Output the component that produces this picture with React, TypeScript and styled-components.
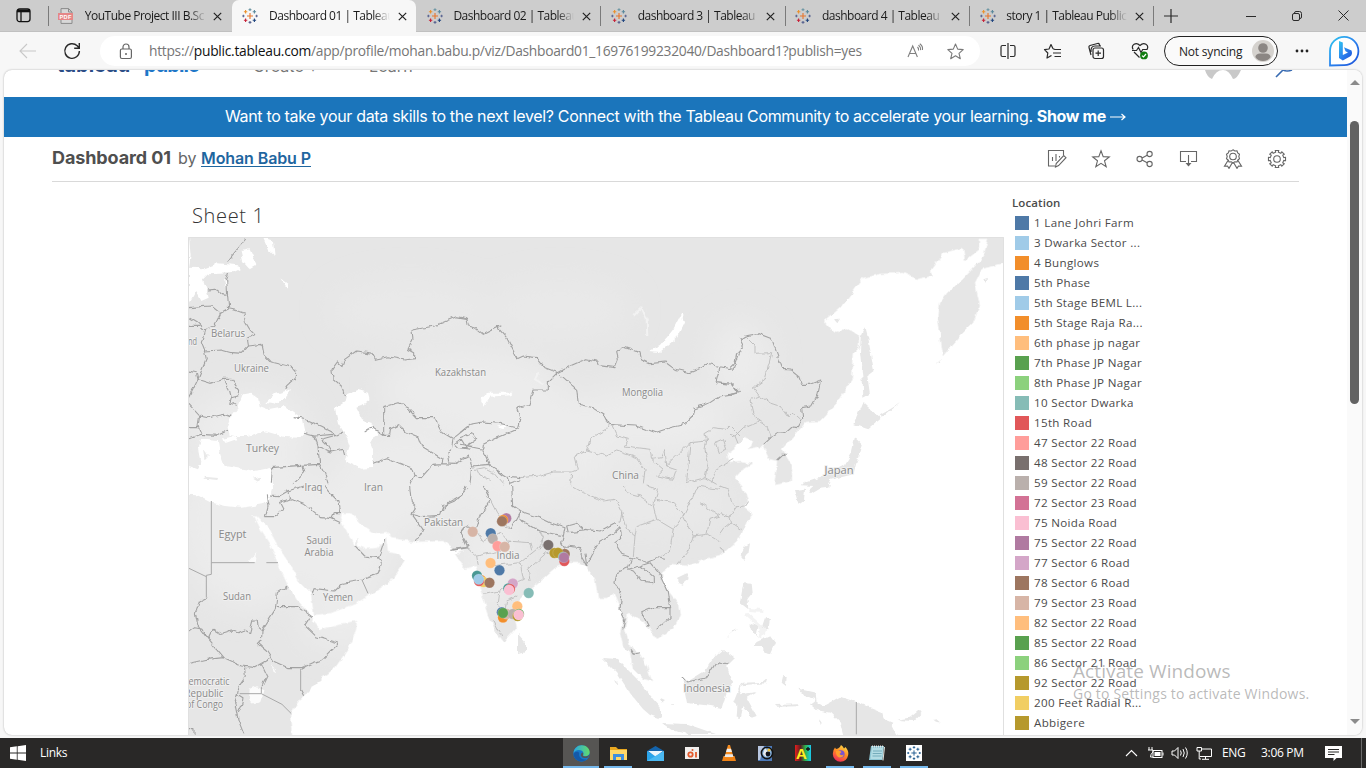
import React from "react";
import styled, { createGlobalStyle } from "styled-components";

const Global = createGlobalStyle`
  * { box-sizing: border-box; }
  body { margin: 0; overflow: hidden; background: #f7f7f7; font-family: "Open Sans", "Noto Sans", sans-serif; }
`;

const Screen = styled.div`
  width: 1366px; height: 768px; display: flex; flex-direction: column; position: relative; overflow: hidden;
`;

/* ---------- browser chrome ---------- */
const TabStrip = styled.div`
  height: 32px; flex: none; display: flex; background: #cdcdcd; border-bottom: 1px solid #c0c0c0; padding-left: 16px;
`;
const TabMenu = styled.div`
  width: 31.5px; display: flex; align-items: center;
`;
const TabBox = styled.div<{ $active?: boolean; $sep?: boolean }>`
  width: 184.3px; height: 32px; flex: none; display: flex; align-items: center; padding-left: 10.7px; position: relative;
  background: ${p => (p.$active ? "#f7f7f7" : "transparent")};
  border-radius: ${p => (p.$active ? "7px 7px 0 0" : "0")};
  &::before {
    content: ""; display: ${p => (p.$sep ? "block" : "none")};
    position: absolute; left: 0; top: 6px; width: 1px; height: 20px; background: #7a7a7a;
  }
`;
const TabText = styled.div`
  width: 121px; margin-left: 10.6px; font-size: 12px; color: #1b1b1b; white-space: nowrap; overflow: hidden; line-height: 18px;
  letter-spacing: -0.5px;
  mask-image: linear-gradient(90deg, #000 86%, transparent 100%);
`;
const CloseIcon = styled.svg` width: 9px; height: 9px; margin-left: 7.7px; flex: none; `;
const NewTab = styled.div` width: 40px; display: flex; align-items: center; padding-left: 11px; position: relative;
  &::before { content: ""; position: absolute; left: 0; top: 6px; width: 1px; height: 20px; background: #7a7a7a; }
`;
const WindowButtons = styled.div` flex: 1; display: flex; align-items: center; justify-content: flex-end; gap: 36px; padding-right: 17px; `;

const Toolbar = styled.div`
  height: 37px; flex: none; display: flex; align-items: center; background: #f7f7f7; padding: 1px 0 0 18px;
`;
const NavIcons = styled.div` width: 82px; display: flex; gap: 27px; align-items: center; `;
const AddressBar = styled.div`
  width: 880px; height: 30px; border-radius: 15px; background: #fff; display: flex; align-items: center; padding: 0 16px 0 19px;
`;
const Url = styled.div`
  flex: 1; margin-left: 16px; font-size: 13.8px; line-height: 20px; color: #767676; white-space: nowrap; letter-spacing: -0.28px;
  b { font-weight: 400; color: #111; }
`;
const ToolIcons = styled.div` display: flex; align-items: center; width: 184px; padding-left: 19px; gap: 24px; `;
const Profile = styled.div`
  width: 114px; height: 30px; border: 1px solid #222; border-radius: 15px; display: flex; align-items: center; justify-content: space-between;
  padding: 0 3px 0 14px; font-size: 12px; color: #222; letter-spacing: -0.2px; white-space: nowrap; background: #fafafa;
`;
const More = styled.div` width: 50px; display: flex; justify-content: center; padding-right: 2px; `;

/* ---------- page ---------- */
const Frame = styled.div`
  height: 665px; margin: 1px 4px 3px; flex: none; display: flex; background: #fff; border-radius: 8px; overflow: hidden; box-shadow: 0 0 2px #a8a8a8;
`;
const Page = styled.div` width: 1343px; height: 665px; display: flex; flex-direction: column; overflow: hidden; `;
const Scrollbar = styled.div`
  width: 15px; background: #fafafa; display: flex; flex-direction: column; align-items: center; padding: 10px 0 11px;
`;
const Arrow = styled.div<{ $down?: boolean }>`
  border: 5px solid transparent; border-top-width: ${p => (p.$down ? 5 : 0)}px; border-bottom-width: ${p => (p.$down ? 0 : 5)}px;
  border-top-color: #8b8b8b; border-bottom-color: #8b8b8b;
`;
const Thumb = styled.div` width: 9px; height: 283px; border-radius: 5px; background: #636363; margin: 36px 0 auto; `;

const SiteHeader = styled.div`
  height: 27px; flex: none; display: flex; overflow: hidden; padding-left: 51px; font-family: Inter, sans-serif; line-height: 22px;
`;
const Brand = styled.div`
  width: 198px; display: flex; margin-top: -16px; font-size: 20px; font-weight: 700; color: #2b4d86; letter-spacing: 0; white-space: nowrap;
`;
const BrandFirst = styled.span` width: 76px; padding-left: 2px; `;
const BrandPlus = styled.span` width: 13px; color: #a6a6a6; font-size: 12px; font-weight: 400; padding-left: 3px; `;
const BrandSecond = styled.span` color: #1f77c8; letter-spacing: -0.9px; `;
const NavLink = styled.div` width: 116px; margin-top: -15px; font-size: 16px; color: #777; letter-spacing: .1px; `;
const HeaderArt = styled.svg` width: 100px; height: 12px; margin-left: 720px; `;
const Banner = styled.div`
  height: 40px; flex: none; background: #1b75bb; color: #fff; display: flex; align-items: center; justify-content: center; gap: 4px;
  font-family: Inter, sans-serif; font-size: 16px; white-space: nowrap; letter-spacing: -0.325px; padding-bottom: 2px;
  b { display: flex; align-items: center; gap: 4px; }
`;
const TitleRow = styled.div`
  height: 45px; flex: none; margin: 0 48px; border-bottom: 1px solid #d9d9d9; display: flex; align-items: center; padding-right: 12px;
  font-family: Inter, sans-serif; color: #4f4f4f; white-space: nowrap;
`;
const VizTitle = styled.div` width: 126px; font-size: 18px; font-weight: 700; letter-spacing: -0.1px; padding-bottom: 3px; `;
const By = styled.div` width: 23px; font-size: 16px; color: #666; padding-bottom: 2px; `;
const Author = styled.div`
  flex: 1; font-size: 16px; font-weight: 600; color: #1f669f; letter-spacing: -0.1px; padding-bottom: 2px;
  text-decoration: underline; text-decoration-thickness: 1px; text-underline-offset: 2px; text-decoration-skip-ink: none;
`;
const Actions = styled.div` display: flex; gap: 24px; `;
const Viz = styled.div` display: flex; flex: 1; padding-left: 184px; `;
const Sheet = styled.div` width: 816px; flex: none; `;
const SheetTitle = styled.div`
  height: 55px; padding: 20px 0 0 4px; font-size: 20px; line-height: 28px; color: #333; font-weight: 300; letter-spacing: 0.65px;
`;
const MapSvg = styled.svg` display: block; width: 816px; height: 498px; `;
const Legend = styled.div` padding: 13px 0 0 8px; font-size: 12px; color: #4b4b4b; `;
const LegendTitle = styled.div` height: 18px; line-height: 15px; font-size: 11.5px; font-weight: 600; letter-spacing: 0.1px; `;
const LegendRow = styled.div` height: 20px; display: flex; align-items: center; padding: 0 0 2px 3px; gap: 5px; white-space: nowrap; `;
const Swatch = styled.div<{ $c: string }>` width: 14px; height: 14px; background: ${p => p.$c}; margin-top: 1px; `;
const LegendText = styled.span` font-size: 11.6px; letter-spacing: 0.32px; `;

const Watermark = styled.div`
  position: absolute; left: 1073px; top: 659px; color: rgba(120,120,120,.52); white-space: nowrap; pointer-events: none;
  div:first-child { font-size: 19px; line-height: 25px; letter-spacing: 0.1px; }
  div:last-child { font-size: 14px; line-height: 20px; letter-spacing: 0.2px; }
`;

/* ---------- taskbar ---------- */
const Taskbar = styled.div` height: 30px; flex: none; background: #292827; display: flex; align-items: center; color: #fff; font-size: 12px; `;
const StartArea = styled.div` width: 563px; display: flex; align-items: center; gap: 14px; padding-left: 10px; letter-spacing: -0.3px; line-height: 16px; `;
const TaskItem = styled.div<{ $active?: boolean; $run?: boolean }>`
  width: 36px; margin-right: 1px; height: 30px; display: flex; align-items: center; justify-content: center; position: relative;
  background: ${p => (p.$active ? "#565553" : "transparent")};
  &::after { content: ""; display: ${p => (p.$run ? "block" : "none")}; position: absolute; height: 2px; bottom: 0;
    left: ${p => (p.$active ? 0 : 4)}px; right: ${p => (p.$active ? 0 : 4)}px; background: #76b9ed; }
`;
const Tray = styled.div` flex: 1; display: flex; align-items: center; justify-content: flex-end; letter-spacing: -0.35px; white-space: nowrap; `;
const Lang = styled.div` width: 39px; margin-left: 9px; padding-bottom: 1px; `;
const Clock = styled.div` width: 64px; letter-spacing: -0.3px; padding-bottom: 1px; `;
const Sliver = styled.div` width: 5px; height: 30px; border-left: 1px solid #6a6a6a; margin-left: 19px; `;

const plus = (x: number, y: number, r: number, c: string) => (
  <path key={`${x}-${y}`} d={`M${x - r} ${y}H${x + r}M${x} ${y - r}V${y + r}`} stroke={c} strokeWidth="1.1" />
);
const TableauMark = ({ mono }: { mono?: boolean }) => {
  const k = (c: string) => (mono ? "#1f5b8f" : c);
  return (
    <svg width="16" height="16" viewBox="0 0 16 16" fill="none">
      {plus(8, 8, 3, k("#e8762d"))}
      {plus(3.6, 3.7, 1.7, k("#eb912c"))}
      {plus(12.4, 3.7, 1.7, k("#59879b"))}
      {plus(3.6, 12.3, 1.7, k("#c72037"))}
      {plus(12.4, 12.3, 1.7, k("#1f447e"))}
      {plus(8, 1.6, 1.4, k("#7199a6"))}
      {plus(8, 14.4, 1.4, k("#5b6591"))}
      {plus(1.4, 8, 1.2, k("#5c6692"))}
      {plus(14.6, 8, 1.2, k("#5c6692"))}
    </svg>
  );
};
const PdfMark = () => (
  <svg width="16" height="16" viewBox="0 0 16 16">
    <path d="M3 .6H10.5L14 4V15.4H3Z" fill="#d8d8d8" stroke="#8a8a8a" />
    <path d="M10.5 .6V4H14" fill="none" stroke="#8a8a8a" />
    <rect x="0" y="5" width="15" height="7" fill="#e58787" />
    <text x="1.4" y="10.8" fontSize="5.6" fontWeight="700" fill="#fff" fontFamily="Liberation Sans" textLength="12">PDF</text>
  </svg>
);
const Close = () => (
  <CloseIcon viewBox="0 0 9 9"><path d="M.8 .8L8.2 8.2M8.2 .8L.8 8.2" stroke="#222" strokeWidth="1.2" /></CloseIcon>
);

const tabs = [
  { t: "YouTube Project III B.Sc", pdf: true, sep: true },
  { t: "Dashboard 01 | Tableau", active: true },
  { t: "Dashboard 02 | Tableau" },
  { t: "dashboard 3 | Tableau", sep: true },
  { t: "dashboard 4 | Tableau", sep: true },
  { t: "story 1 | Tableau Public", sep: true },
];

const S = { fill: "none", stroke: "#2a2a2a", strokeWidth: 1.2 } as const;
const star = "M8.5 1L10.7 6.1L16.2 6.6L12 10.3L13.3 15.7L8.5 12.8L3.7 15.7L5 10.3L.8 6.6L6.3 6.1Z";

const BrowserChrome = () => (
  <>
    <TabStrip>
      <TabMenu>
        <svg width="15" height="15" viewBox="0 0 15 15" fill="none" stroke="#111" strokeWidth="1.3">
          <rect x="1" y="1" width="13" height="12.6" rx="2.5" /><path d="M1 3H14" strokeWidth="2.6" /><path d="M5 4V14" />
        </svg>
      </TabMenu>
      {tabs.map(t => (
        <TabBox key={t.t} $active={t.active} $sep={t.sep}>
          {t.pdf ? <PdfMark /> : <TableauMark />}
          <TabText>{t.t}</TabText>
          <Close />
        </TabBox>
      ))}
      <NewTab><svg width="14" height="14"><path d="M7 0V14M0 7H14" {...S} /></svg></NewTab>
      <WindowButtons>
        <svg width="10" height="10"><path d="M0 5.5H10" {...S} strokeWidth="1" /></svg>
        <svg width="10" height="10" {...S} strokeWidth="1"><rect x=".5" y="2.5" width="7" height="7" rx="1.5" /><path d="M2.5 2.5V2Q2.5 .5 4 .5H7.5Q9.5 .5 9.5 2.5V6Q9.5 7.5 8 7.5" /></svg>
        <svg width="11" height="11"><path d="M.5 .5L10.5 10.5M10.5 .5L.5 10.5" {...S} strokeWidth="1" /></svg>
      </WindowButtons>
    </TabStrip>
    <Toolbar>
      <NavIcons>
        <svg width="18" height="16" fill="none" stroke="#c8c8c8" strokeWidth="1.1"><path d="M2 8H18M9 1L2 8L9 15" /></svg>
        <svg width="18" height="18" {...S} strokeWidth="1.4"><path d="M16.4 9A7.3 7.3 0 1 1 14.2 3.8L16.2 6M16.3 1V6.2H11.2" /></svg>
      </NavIcons>
      <AddressBar>
        <svg width="14" height="17" fill="none" stroke="#666" strokeWidth="1.2"><rect x="1.4" y="6" width="11" height="9.5" rx="1.5" /><path d="M4 6V4A3 3 0 0 1 10 4V6" /><circle cx="7" cy="11" r="1" fill="#666" stroke="none" /></svg>
        <Url>https://<b>public.tableau.com</b>/app/profile/mohan.babu.p/viz/Dashboard01_16976199232040/Dashboard1?publish=yes</Url>
        <svg width="18" height="16" fill="none" stroke="#808080" strokeWidth="1.1"><path d="M1 14L5.7 3L10.4 14M2.6 10.5H8.8M10.5 4Q12 5.5 11.5 7.5M11.5 2.2Q14 4.3 13.5 7.2M12.8 .8Q16.2 3.4 15.4 7" /></svg>
        <svg width="17" height="17" style={{ marginLeft: 22 }} fill="none" stroke="#7a7a7a" strokeWidth="1.1"><path d={star} strokeLinejoin="round" /></svg>
      </AddressBar>
      <ToolIcons>
        <svg width="18" height="16" {...S}><path d="M9 0V16M7 2.5H3.5Q2 2.5 2 4V12Q2 13.5 3.5 13.5H7M11 2.5H14.5Q16 2.5 16 4V12Q16 13.5 14.5 13.5H11" /></svg>
        <svg width="20" height="17" {...S} style={{ marginLeft: 2 }}><path d="M10 5.7L8 1.5L6 6L1.5 6.7L4.8 10L4 15L7.5 13M11.5 6.5H18M10 10H18M11.5 13.5H18M10 5.7L12 6.5M4 15L8.5 12.5" strokeLinejoin="round" /></svg>
        <svg width="18" height="18" {...S}><rect x="6" y="6" width="10.5" height="10.5" rx="2" /><path d="M11.2 8.5V14M8.5 11.2H14M4 13L2 5.5Q1.5 4 3 3.5L10.5 1.5Q12 1.2 12.4 2.5L13 4M4 10Q3.5 4 8 4H14" /></svg>
        <svg width="19" height="18" {...S} style={{ marginLeft: 2 }}><path d="M2.2 7.5C-.5 3 5 -.7 9 3.5C13 -.7 18.5 3 16 7.5M3 10L8.5 15.5M1 8.5H5.5L7.5 5.5L10 10.5L11.7 7.5H16.5" /><circle cx="13" cy="13.4" r="3.9" fill="#107c10" stroke="none" /><path d="M11 13.6L12.5 15L15 12" stroke="#fff" /></svg>
      </ToolIcons>
      <Profile>Not syncing
        <svg width="22" height="22"><circle cx="11" cy="11" r="11" fill="#d5d2ce" /><circle cx="11" cy="8" r="4.8" fill="#8b8683" /><path d="M3.3 17Q4 13.5 8 13.5H14Q18 13.5 18.7 17Q16 21 11 21Q6 21 3.3 17Z" fill="#8b8683" /></svg>
      </Profile>
      <More><svg width="14" height="4"><circle cx="2" cy="2" r="1.4" fill="#222" /><circle cx="7" cy="2" r="1.4" fill="#222" /><circle cx="12" cy="2" r="1.4" fill="#222" /></svg></More>
      <svg width="32" height="32" viewBox="0 0 32 32">
        <defs><linearGradient id="bing" x1="0" y1="0" x2="1" y2="1"><stop offset="0" stopColor="#2fc8ef" /><stop offset=".5" stopColor="#2b83ee" /><stop offset="1" stopColor="#1b4fd8" /></linearGradient></defs>
        <path d="M2 30.5V16A14.2 14.2 0 1 1 16 30.2Z" fill="#fff" stroke="url(#bing)" strokeWidth="1.8" />
        <path d="M11 6L14.8 7.4V20L20 17.5L17.5 16.2L16 12.3L23.5 15.5Q25 19.5 22 21.5L14.8 25.6L11 23Z" fill="url(#bing)" />
      </svg>
    </Toolbar>
  </>
);

/* ---------- map artwork: detail groups are drawn on 3x tiles ---------- */
const tile = (x: number, y: number) => `translate(${x} ${y}) scale(.33333)`;

const ocean =
  "M292 734L290 716L298 701L304 697L316 683L335 668L348 649L356 631L357 621L338 624L320 630L312 621L313 618L298 601L288 586L278 564L270 544L260 528L253 514L268 528L281 551L291 566L300 583L311 594L314 615L331 613L355 604L373 593L391 581L405 561L398 553L388 551L386 538L378 548L365 549L358 546L357 538L354 546L348 534L340 518L341 513L351 513L361 524L375 533L388 532L391 538L415 542L443 541L453 549L464 551L455 554L465 569L475 566L477 571L479 586L485 603L490 619L498 636L503 642L508 638L517 628L515 619L518 606L519 600L528 591L540 581L555 568L567 563L580 563L587 568L595 579L598 598L607 598L613 593L620 609L623 619L620 633L623 646L630 653L633 669L643 679L652 681L647 666L640 654L630 646L625 629L628 613L637 618L648 626L656 639L673 629L680 616L678 603L670 593L663 583L662 573L673 564L687 566L702 561L720 556L737 541L745 528L752 513L743 506L748 501L742 486L735 478L741 471L753 464L740 462L730 463L727 454L735 448L745 438L752 441L748 449L763 446L769 459L777 461L776 472L774 485L780 484L792 481L792 466L782 449L797 433L806 422L820 421L837 403L852 379L854 353L859 348V335L845 328L840 333L833 331L825 321L840 308L853 291L863 278L880 274L903 273L917 279L933 276L930 271L943 253L963 248L965 261L980 249V239H988L984 254L978 263L963 279L947 293L940 303L938 319L943 356L960 336L973 323L980 306L975 283L982 269L1008 262V740H292Z";

const waterWest =
  "M3 3L8 60L3 95L50 97L90 82L150 88L155 100L130 112L60 115L45 130L55 160L62 185L40 195L25 165L3 205ZM158 45L185 40L205 85L185 97L165 75ZM225 5L255 15L260 60L240 40ZM280 130L300 145V160ZM108 130L120 140L115 160ZM165 475L190 470L210 485L215 510L240 520L290 510L340 545L350 590L335 605L290 603L230 585L180 600L125 600L118 570L130 540L150 515ZM232 500L260 475L310 460L290 485L265 507ZM105 608L140 600L145 610L115 620ZM475 475L510 462L540 470L545 490L520 510L505 515L525 555L550 560L570 600L545 615L555 640V695L520 698L470 675L485 630L475 600L450 560L440 515L470 495ZM-12 690L40 690L30 640L40 610L90 615L95 650L110 690L170 700L200 705L250 695L255 750L245 785L225 805L160 815L110 810L70 800L25 778L-12 775Z";
const bordersWest =
  "M118 76L176 6M122 112L116 130L118 165L122 218M60 162L80 160L105 176L118 178M3 215L40 212L70 210L98 232L122 218L140 222L168 232L172 258L185 280L200 296L178 306L182 330L222 325L228 355L250 378L300 390L324 404L320 430L300 448L292 460M98 232L80 268L50 282L30 262L3 245M3 271H35M50 282L40 320L50 345L100 342L130 350L160 352L182 330M50 345L55 370L30 430L3 485M3 405L25 410L30 430L68 442L105 430L130 430L152 460L150 480L130 485L125 502L148 508M105 430L125 465L130 485M3 505L35 540L60 545L110 535L130 542M35 540L30 570L40 595L3 608M40 595L90 598L120 583M3 575H30M320 545L350 550L400 570L435 588L440 600L465 588M345 592L380 600L435 595M380 600L390 630L430 648L420 630L400 610L435 600M390 630L395 685M430 648L465 640L470 658M253 695L290 692L340 688L395 685L410 710L420 745M345 690L350 710L315 745M470 480L460 450L435 428L432 400L448 378L462 392L470 370L505 345L555 352L565 370L600 362L650 372L680 368V350L660 340L675 310L672 282L740 270L805 242L840 248M587 598V512L630 500L660 515L688 545L740 545L765 590L795 608L840 572M530 585L550 573L587 598H605L608 578L632 566L655 588L690 602L700 630L765 670L762 683L735 685L700 725L678 718L670 695L630 680L600 665L555 682M762 683L800 685L840 665M795 608L790 640L780 650L785 680M678 718L665 745M253 695L250 740M800 625L820 610L835 635L810 635Z";
const bordersMid =
  "M0 240L20 245L25 270L45 275L70 295L100 280L120 270L110 272L140 305L172 368L190 360L230 365L255 395L295 410L335 388L380 368L410 375L415 388L465 395L475 370L470 350L487 332L540 350L545 372L570 383L615 378L645 400L690 410L725 395L745 382L780 392L820 400L840 345M780 392L768 440L815 445L838 470L780 480L750 500L705 515L700 540L675 565L630 575L585 590L530 570L445 565L430 535L400 515L355 505L350 460L300 415M295 410L265 440V462H222L210 505L170 515L182 550L175 577L100 610L70 625L68 640L90 690L140 720L180 725M0 590L30 565L70 558L120 562L175 577M0 605L35 590L50 610L20 630L68 640M0 672L25 660L35 690L85 685L130 720M35 690L30 745M0 625L40 632M0 635L30 640M140 720L150 745L175 735L180 725";
const provincesMid =
  "M180 725L240 720L280 708H335L355 700L345 660L380 645L390 610L440 580L445 565M380 645L440 660L470 645L530 665L555 700L550 745M455 565L470 600L505 610L495 630L570 640L575 670M335 708L332 745M575 670L605 665L615 640L620 690L650 700L640 730L590 720L610 700L575 670M620 690L650 660L690 620L740 615L735 590L760 575L800 580L810 570L840 600M690 620L680 740L735 725L745 680L735 640L740 615M765 620L790 610L800 640L775 650ZM755 740L770 700L820 670M735 725L770 745M45 700L70 695L100 710L130 745M50 700L60 720L90 730";
const bordersEast =
  "M0 395L15 380L20 350L40 330L30 310L45 300L85 293L125 308L140 350L158 400L185 402L205 418L215 445L240 445L272 432L262 480L245 510L215 515L218 550L205 572L190 570L165 592L145 590L120 608L98 628M0 440L25 470L0 475M140 672L155 658H170";
const provincesEast =
  "M45 300L75 330V352L125 350L105 430L70 455L88 480L60 492L70 540L110 570L125 605M88 480L120 500L150 510L175 545L190 530L212 550M90 555L40 575L15 600L25 625M0 595L15 600";
const straightAfrica = "M70 45V265L55 268V335M70 230H200M235 230H270M3 247L55 272M338 555V615M155 623H220L282 655L310 683M220 605V623M522 282L540 322";
const bordersAfrica =
  "M55 335L35 345L22 380L30 420L60 460M60 460L75 430L100 445L130 435L150 440L170 432L185 440L195 402H208L210 425L222 435L230 420L262 370L268 320L298 300M0 440L20 425L45 430L60 460L105 515L60 520L0 533M105 515L160 540L200 545L245 520M222 435L220 465L208 472L235 495L255 525L300 545H340L375 530L405 520L452 472L385 452L350 418L365 395M262 362L330 362L372 392M350 540L338 555M338 615L347 632M170 545L172 570L155 595L148 625L140 650L150 700L168 745M220 535L237 570L220 605M148 625L165 635L162 655L150 680M372 325L378 308L440 315L465 292L522 282L570 265L580 230L572 215L530 210L500 178M572 215L590 160M432 98L400 95L350 55L305 38L300 15L345 0M305 38L275 50L285 70L260 92H232M245 30L270 32L300 15M235 25L240 60L232 92M432 98L440 80L460 80M432 98L458 110M455 80L450 45L420 15L410 0M665 0L670 50L685 65L672 85L700 92L755 88L765 60L800 45L840 5M672 85L705 130L685 168M840 115L815 140L830 165L840 185L790 193M3 728H18V745";
const bordersSouth =
  "M0 80L30 45L65 25L75 0M40 190L80 185L60 140L75 120L105 130L120 90L150 40L130 0M215 0L218 60L240 75L210 130M240 75L300 95L335 112L375 125L370 150L300 135L235 98ZM380 120L410 112L435 135L385 140ZM435 130L480 135L525 110L540 125L520 145L480 165L455 210L440 240L435 200M370 150L365 170L385 200L380 232M375 180L425 185L420 205L440 240M540 125L545 155L525 170L545 205L575 215L565 245L530 260L525 290L545 330L540 370L555 400L548 430M575 215L620 228L650 215L675 220M565 250L600 240L640 275V290L605 285L580 255L565 250M600 240L630 230L660 265L685 320L692 365L640 365L605 380L625 420M690 365V395L650 430M570 490L580 505L600 500M725 572L740 588L800 575L825 535L840 530";
const provincesSouth =
  "M105 130L130 165L180 140L200 165L270 170L275 190M110 210L180 195L210 165M80 185L110 210L115 240M150 240L240 230L250 280L200 300M240 230L290 190L310 155M270 285L265 250L320 200L345 195M130 325L180 315L210 290M180 315L175 350L180 380M235 330L200 345L190 400M160 400L185 450M300 135L310 155L300 190M210 130L170 110M150 40L170 80L210 130M395 0L430 20L490 45L525 40L545 80L540 110M545 80L560 130L585 150L590 120L650 100L640 60L600 30L560 20L550 0M650 100L700 130L730 90L700 50L650 40M730 90L760 150L800 145L840 170M700 130L690 190L660 215M760 150L740 200L710 235M840 10L770 0L750 50L730 90M585 150L580 210M640 60L655 10L620 0M800 145L810 100L840 90M780 50L840 90";

const labels: [string, number, number, number][] = [
  ["Belarus", 211, 337, 34], ["nd", 188, 345, 9], ["Ukraine", 234, 372, 35], ["Turkey", 246, 452, 33], ["Kazakhstan", 435, 376, 51],
  ["Mongolia", 622, 396, 41], ["China", 612, 479, 27], ["Japan", 824.5, 474, 29], ["Iraq", 304.5, 490.5, 18], ["Iran", 364, 490.5, 19],
  ["Egypt", 218.5, 538, 28], ["Saudi", 306.5, 544, 25], ["Arabia", 304.5, 556, 29], ["Yemen", 323, 601, 30], ["Sudan", 223, 600, 28],
  ["emocratic", 188.5, 685, 41], ["Republic", 184.5, 696.5, 39], ["of Congo", 186, 708, 37], ["Pakistan", 424, 525.5, 39], ["India", 496.5, 558.5, 23], ["Indonesia", 683.5, 692, 47],
];

const marks: [number, number, string][] = [
  [506.3, 518.3, "#b07aa1"], [503, 520, "#f28e2b"], [502, 521.3, "#9d7660"], [472.7, 531.7, "#d7b5a6"], [490.7, 533.2, "#4e79a7"],
  [492.7, 538.8, "#bab0ac"], [497.5, 546, "#ff9d9a"], [504.7, 546.8, "#d7b5a6"], [548.3, 545, "#79706e"], [564.8, 554, "#9d7660"],
  [554.5, 553, "#b6992d"], [558, 552.8, "#b6992d"], [564.3, 561, "#e15759"], [563.2, 557, "#86bcb6"], [564, 557.5, "#b07aa1"],
  [490.5, 563, "#ffbe7d"], [499.5, 570.3, "#4e79a7"], [477, 575.7, "#499894"], [481, 580, "#f28e2b"], [483.5, 582, "#f1ce63"],
  [479, 581, "#e15759"], [489.5, 582.7, "#9d7660"], [478.7, 579.3, "#a0cbe8"], [512.8, 583.5, "#d4a6c8"], [508.3, 588.5, "#499894"],
  [510, 589, "#e15759"], [509, 590, "#fabfd2"], [528.7, 593, "#86bcb6"], [517.3, 606.3, "#ffbe7d"], [501.8, 612.3, "#4e79a7"],
  [503, 617.5, "#f28e2b"], [506.7, 614, "#d7b5a6"], [512.7, 614, "#bab0ac"], [517.6, 616, "#b6992d"], [519, 614, "#59a14f"],
  [503, 613, "#59a14f"], [518.7, 614.7, "#fabfd2"],
];

const WorldMap = () => (
  <MapSvg viewBox="188 237 816 498">
    <defs>
      <filter id="rough" x="-2%" y="-2%" width="104%" height="104%" colorInterpolationFilters="sRGB">
        <feTurbulence type="fractalNoise" baseFrequency=".14" numOctaves="2" seed="7" result="n" />
        <feDisplacementMap in="SourceGraphic" in2="n" scale="5" xChannelSelector="R" yChannelSelector="G" />
      </filter>
      <filter id="haze"><feGaussianBlur stdDeviation="14" /></filter>
    </defs>
    <rect x="188" y="237" width="816" height="498" fill="#e6e6e6" />
    <g filter="url(#haze)" fill="#ececec">
      <ellipse cx="250" cy="520" rx="70" ry="90" /><ellipse cx="340" cy="540" rx="60" ry="60" /><ellipse cx="400" cy="480" rx="70" ry="50" />
      <ellipse cx="540" cy="440" rx="80" ry="50" /><ellipse cx="530" cy="490" rx="70" ry="20" /><ellipse cx="470" cy="390" rx="90" ry="40" />
      <ellipse cx="650" cy="420" rx="80" ry="35" /><ellipse cx="410" cy="310" rx="80" ry="30" fill="#e9e9e9" /><ellipse cx="250" cy="430" rx="60" ry="40" />
      <ellipse cx="560" cy="310" rx="70" ry="30" fill="#e9e9e9" /><ellipse cx="740" cy="360" rx="30" ry="40" /><ellipse cx="340" cy="620" rx="40" ry="30" />
      <ellipse cx="490" cy="560" rx="30" ry="50" /><ellipse cx="640" cy="500" rx="90" ry="30" fill="#e9e9e9" />
    </g>
    <g filter="url(#rough)">
      <path d={ocean} fill="#fff" stroke="#f4f4f4" strokeWidth=".8" />
      <g transform={tile(188, 236)}>
        <path d={waterWest} fill="#fff" />
        <path d="M195 728L220 722L212 738ZM50 722L90 726L88 732L50 728ZM10 650L40 680L30 700L3 690V650ZM45 640L60 660L50 670Z" fill="#e9e9e9" />
      </g>
      <g transform={tile(460, 236)} fill="#fff">
        <path d="M665 230L672 260L650 305L600 348L568 345L600 330L640 280ZM62 490L85 470L158 470L150 478L90 482L72 510ZM108 572L145 564L130 580Z" />
        <path d="M520 240L545 215L560 250L562 300M235 410L225 430L250 445" fill="none" stroke="#f2f2f2" strokeWidth="6" />
      </g>
      <g transform={tile(188, 486)} fill="#fbfbfb"><path d="M185 608L205 600L230 610L220 645L200 655L183 640ZM178 230L205 198L200 225ZM250 530L265 560L258 560Z" /></g>
      <g fill="#e6e6e6">
        <path d="M518 634L526 643V652L518 654ZM602 658L617 659L637 679L653 699L661 708V719L650 715L643 709L630 693L617 673ZM662 723L687 724L707 731L716 734H690L673 731ZM682 677L687 682L705 671L716 655L723 649L735 658L727 666L732 683L726 694L722 708L705 705L687 703Z" />
        <g transform={tile(730, 236)}>
          <path d="M405 272L415 310L432 405L412 420L420 475L400 485L398 430L390 350L392 300ZM398 498L452 548L415 580L370 565ZM375 605L395 625L385 660L370 715L300 732L290 752L215 748L225 738L290 715L345 685L365 650ZM618 385L635 368L630 380ZM450 538L510 502L455 545ZM312 250L330 248L322 262ZM760 130L775 125L765 138Z" />
        </g>
        <g transform={tile(720, 486)}>
          <path d="M222 12L255 8L252 45L235 56ZM265 14L290 -10L330 -5L325 5L300 8L272 25ZM75 180L90 172L85 205L70 225L62 205ZM70 292L95 293L98 320L82 340L85 370L60 350ZM92 410L115 420L110 450L92 430ZM135 395L150 400L145 430L120 440ZM95 485L110 468L150 450L165 470L150 505L130 500L130 480L100 480ZM15 460L50 425L45 435ZM65 590L130 588L142 578L138 592L65 598L60 625L110 618L80 635L110 690L95 695L70 660L62 695H50L52 660L40 650L60 600ZM190 570H200L198 600L185 590ZM165 657L235 655V661L170 662ZM298 700L305 710L298 720ZM235 608L290 620L293 650L310 660L360 632L410 648L490 680L495 700L520 710L515 720L530 750H370L360 710L330 680L290 672L270 655L290 640L250 630ZM530 702L570 695L598 672L605 680L580 705ZM640 695L660 712L650 712ZM670 722L690 738Z" />
          <path d="M85 372L130 375M80 385L130 430L120 455" stroke="#f3f3f3" strokeWidth="12" fill="none" />
        </g>
        <g transform={tile(440, 486)}><path d="M712 275L740 262L747 278L725 296L712 290ZM660 635L675 642L665 650ZM690 652H702V656ZM525 585L535 592L530 595ZM548 625L565 640Z" /></g>
      </g>
      <g fill="none" stroke="#a2a2a2" strokeWidth="3.3" strokeLinejoin="round">
        <g transform={tile(188, 236)}><path d={bordersWest} /></g>
        <g transform={tile(460, 236)}><path d={bordersMid} /><path d={provincesMid} stroke="#bdbdbd" strokeWidth="2.8" /></g>
        <g transform={tile(730, 236)}><path d={bordersEast} /><path d={provincesEast} stroke="#bdbdbd" strokeWidth="2.8" /></g>
        <g transform={tile(188, 486)}><path d={bordersAfrica} /></g>
        <g transform={tile(440, 486)}><path d={bordersSouth} /><path d={provincesSouth} stroke="#bdbdbd" strokeWidth="2.8" /></g>
        <g transform={tile(720, 486)}>
          <path d="M0 532H25" />
          <path d="M0 0L25 10L35 50L50 62L30 90L35 110L65 130M0 80L30 90M35 110L10 130L0 145M50 62L75 60L85 45M0 180L12 200" stroke="#bdbdbd" strokeWidth="2.8" />
        </g>
      </g>
    </g>
    <g fill="none" stroke="#a9a9a9" strokeWidth="3">
      <path d={straightAfrica} transform={tile(188, 486)} />
      <path d="M409 648V745" transform={tile(720, 486)} />
    </g>
    <g fontFamily="Open Sans, sans-serif" fontSize="10.3" fill="#8a8a8a" stroke="#f0f0f0" strokeWidth="2" paintOrder="stroke" strokeLinejoin="round">
      {labels.map(([t, x, y, w]) => <text key={t} x={x} y={y} textLength={w} lengthAdjust="spacingAndGlyphs">{t}</text>)}
    </g>
    {marks.map(([x, y, c], i) => <circle key={i} cx={x} cy={y} r="5.2" fill={c} stroke="#fff" strokeOpacity=".3" strokeWidth=".5" />)}
    <path d="M188.5 735V237.5H1003.5V735" fill="none" stroke="#e0e0e0" />
  </MapSvg>
);

const legend: [string, string][] = [
  ["#4e79a7", "1 Lane Johri Farm"], ["#a0cbe8", "3 Dwarka Sector ..."], ["#f28e2b", "4 Bunglows"], ["#4e79a7", "5th Phase"],
  ["#a0cbe8", "5th Stage BEML L..."], ["#f28e2b", "5th Stage Raja Ra..."], ["#ffbe7d", "6th phase jp nagar"], ["#59a14f", "7th Phase JP Nagar"],
  ["#8cd17d", "8th Phase JP Nagar"], ["#86bcb6", "10 Sector Dwarka"], ["#e15759", "15th Road"], ["#ff9d9a", "47 Sector 22 Road"],
  ["#79706e", "48 Sector 22 Road"], ["#bab0ac", "59 Sector 22 Road"], ["#d37295", "72 Sector 23 Road"], ["#fabfd2", "75 Noida Road"],
  ["#b07aa1", "75 Sector 22 Road"], ["#d4a6c8", "77 Sector 6 Road"], ["#9d7660", "78 Sector 6 Road"], ["#d7b5a6", "79 Sector 23 Road"],
  ["#ffbe7d", "82 Sector 22 Road"], ["#59a14f", "85 Sector 22 Road"], ["#8cd17d", "86 Sector 21 Road"], ["#b6992d", "92 Sector 22 Road"],
  ["#f1ce63", "200 Feet Radial R..."], ["#b6992d", "Abbigere"],
];

const A = { width: 20, height: 20, viewBox: "0 0 20 20", fill: "none", stroke: "#666", strokeWidth: 1.1 } as const;
const gear = Array.from({ length: 16 }, (_, i) => {
  const a = (i * Math.PI) / 8 - Math.PI / 16;
  const b = a + Math.PI / 8;
  const r = i % 2 ? 6.9 : 8.7;
  return `${i ? "L" : "M"}${(10 + r * Math.cos(a)).toFixed(2)} ${(10 + r * Math.sin(a)).toFixed(2)}L${(10 + r * Math.cos(b)).toFixed(2)} ${(10 + r * Math.sin(b)).toFixed(2)}`;
}).join("") + "Z";

const VizActions = () => (
  <Actions>
    <svg {...A}><path d="M8 17H1.5V1.5H16.5V6M5.5 12V8M9 12V5M12.5 8.5V7M8.5 18L9.2 14.5L16.7 6.5L19 8.7L11.6 16.6Z" /></svg>
    <svg {...A}><path d="M10 1.8L12.2 7.6L18.3 7.9L13.5 11.8L15.2 17.8L10 14.4L4.8 17.8L6.5 11.8L1.7 7.9L7.8 7.6Z" /></svg>
    <svg {...A}><circle cx="4.6" cy="10" r="2.6" /><circle cx="14.6" cy="5" r="2.6" /><circle cx="14.6" cy="15" r="2.6" /><path d="M7 8.9L12.2 6.2M7 11.1L12.2 13.8" /></svg>
    <svg {...A}><path d="M7 12.5H1.5V2.5H17.5V12.5H12M9.5 6V15" /><path d="M6.5 14H12.5L9.5 17.5Z" fill="#666" stroke="none" /></svg>
    <svg {...A}><circle cx="10" cy="7.5" r="3.3" /><path d="M10 .8L11.8 2L14 1.8L14.7 4L16.5 5.2L15.8 7.5L16.5 9.7L14.7 11L14 13L11.8 12.9L10 14L8.2 12.9L6 13L5.3 11L3.5 9.7L4.2 7.5L3.5 5.2L5.3 4L6 1.8L8.2 2ZM5 11.5L1.5 17.2L4.5 17L6 19.4L9.3 13.7M15 11.5L18.5 17.2L15.5 17L14 19.4L10.7 13.7" /></svg>
    <svg {...A}><path d={gear} /><circle cx="10" cy="10" r="3.3" /></svg>
  </Actions>
);

const WindowsTaskbar = () => (
  <Taskbar>
    <StartArea>
      <svg width="16" height="16" fill="#fff"><path d="M0 2.3L6.8 1.3V7.6H0ZM7.6 1.2L16 0V7.6H7.6ZM0 8.4H6.8V14.7L0 13.7ZM7.6 8.4H16V16L7.6 14.8Z" /></svg>
      <span>Links</span>
    </StartArea>
    <TaskItem $active $run>
      <svg width="17" height="17" viewBox="0 0 17 17">
        <defs><linearGradient id="edge" x1="0" y1="0" x2="1" y2="0"><stop offset="0" stopColor="#2aa7e0" /><stop offset="1" stopColor="#62dc6b" /></linearGradient></defs>
        <circle cx="8.5" cy="8.5" r="8.2" fill="#1678c8" />
        <path d="M.5 8C1 3.5 4.5 .3 8.7 .3C13.5 .3 16.7 3.8 16.7 7.2C16.7 10 14.5 11.3 12.2 11.3C10 11.3 9.8 10.4 10.3 9.7C11.2 8 9.8 5 6 5C3 5 1.2 6.6 .5 8Z" fill="url(#edge)" />
        <path d="M6.2 8C5.4 11.5 8 15.3 13.5 14.2C10 18 2 17 .6 10C.5 7 5 5.5 6.2 8Z" fill="#1459a8" />
        <path d="M9.8 7.6Q10.6 8.8 9.8 10.3Q10 11.5 12.5 11.5Q15 11.4 16.3 9.8L15.3 12.2Q10 14.5 8 11Q7.3 8.5 9.8 7.6Z" fill="#565553" />
      </svg>
    </TaskItem>
    <TaskItem $run><svg width="17" height="15"><path d="M0 1H6L8 3H17V14H0Z" fill="#e9a820" /><path d="M0 4H17V14H0Z" fill="#ffd768" /><path d="M3 14V8H14V14H11V11H6V14Z" fill="#3f8ede" /></svg></TaskItem>
    <TaskItem><svg width="17" height="15"><path d="M0 5L8.5 0L17 5V15H0Z" fill="#1464ac" /><path d="M0 5L8.5 10L17 5V15H0Z" fill="#2aa4ea" /><path d="M1 5H16L8.5 10.5Z" fill="#eef6fc" /><path d="M0 15L8.5 10L17 5V15Z" fill="#4bb9f2" /></svg></TaskItem>
    <TaskItem><svg width="14" height="13"><rect width="14" height="12" fill="#f1efed" /><circle cx="5.5" cy="7.5" r="2.2" fill="none" stroke="#e35b2d" strokeWidth="1.8" /><path d="M11 5V10.5" stroke="#e35b2d" strokeWidth="1.8" /><circle cx="7.5" cy="3" r="1" fill="#d45b34" /></svg></TaskItem>
    <TaskItem><svg width="14" height="16"><path d="M1.5 11H12.5L14 16H0Z" fill="#f08316" /><path d="M6 0H8L11.5 12Q7 14 2.5 12Z" fill="#f58b1e" /><path d="M5 3.7H9L10 7H4Z" fill="#eee" /><path d="M3.3 9.3H10.7L11.4 12H2.6Z" fill="#e8e8e8" /></svg></TaskItem>
    <TaskItem><svg width="16" height="16"><rect width="14" height="15" y="1" fill="#4c79b8" /><path d="M0 1H6L2 15H0Z" fill="#b8c6e0" /><circle cx="9" cy="8" r="5.6" fill="#8ab5e0" stroke="#111" strokeWidth="1.6" /><path d="M7 3L10 7L8 12L5 9Z" fill="#e9ecef" /><circle cx="10" cy="9" r="2.4" fill="#15151c" /><circle cx="11" cy="5" r="1.5" fill="#f4c43c" /></svg></TaskItem>
    <TaskItem><svg width="16" height="16"><defs><linearGradient id="rainbow"><stop offset="0" stopColor="#e4201b" /><stop offset=".35" stopColor="#5c1b25" /><stop offset=".65" stopColor="#2cb649" /><stop offset="1" stopColor="#1ac8ed" /></linearGradient></defs><rect width="16" height="16" fill="url(#rainbow)" /><text x="1" y="14" fontFamily="Liberation Sans" fontWeight="700" fontSize="15" fill="#ffef20">A</text><path d="M11 4H15M13 2V6" stroke="#111" strokeWidth="1.3" /></svg></TaskItem>
    <TaskItem $run><svg width="17" height="17" viewBox="0 0 17 17"><defs><linearGradient id="fox" x1=".8" y1="0" x2=".3" y2="1"><stop offset="0" stopColor="#ffe04a" /><stop offset=".5" stopColor="#ff8a23" /><stop offset="1" stopColor="#f0275c" /></linearGradient></defs><path d="M8.5 16.7A7.8 7.8 0 0 1 .8 9Q.7 5 3 2.5L4 4L6 3.5Q8 3 9 0Q11 1 12 3.5L13.5 2Q17 6 16.2 10Q14.8 16.7 8.5 16.7Z" fill="url(#fox)" /><circle cx="8.8" cy="9" r="3.8" fill="#7953d2" /><path d="M4 6Q8 5 9.5 7L7.5 9Q9 11 12 9.5Q10.5 13.2 7 12.4Q3.5 11 4 6Z" fill="#ff9f2c" /></svg></TaskItem>
    <TaskItem $run><svg width="16" height="16"><path d="M2 1H15L13.5 15H0Z" fill="#8ec6d4" /><path d="M3 3H14L13 14H1.5Z" fill="#b3dce4" /><path d="M4 6H13M3.7 8.5H12.7M3.5 11H12.5" stroke="#75acbb" /><path d="M3 1.5H15" stroke="#e8e8e8" strokeWidth="2" strokeDasharray="1 1" /><path d="M15.5 2L14 15.5" stroke="#e4e2dc" /></svg></TaskItem>
    <TaskItem $run><svg width="16" height="16"><rect width="16" height="16" fill="#fff" /><svg x="1" y="1" width="14" height="14" viewBox="0 0 16 16"><TableauMark mono /></svg></svg></TaskItem>
    <Tray>
      <svg width="13" height="8" fill="none" stroke="#fff" strokeWidth="1.1"><path d="M1 7L6.5 1.5L12 7" /></svg>
      <svg width="17" height="14" fill="none" stroke="#fff" style={{ marginLeft: 9 }}><rect x="6" y="4.5" width="9" height="7" /><path d="M16 6.5V9.5M2 1V4M5 1V4M1 4H6V6Q3.5 8 3.5 11H6" /><rect x="8" y="6.5" width="5" height="3" fill="#fff" /></svg>
      <svg width="18" height="14" fill="none" stroke="#fff" style={{ marginLeft: 7 }}><path d="M1 5H3.5L7 1.5V12.5L3.5 9H1ZM9.5 4.5Q11 7 9.5 9.5M12 3Q14.5 7 12 11M14.5 1.5Q18 7 14.5 12.5" /></svg>
      <svg width="17" height="14" fill="none" stroke="#fff" style={{ marginLeft: 7 }}><path d="M5 3H15.5V10.5H4M9.5 10.5V13M6 13.3H13M1 1.5H5.5V5H1ZM3.2 5V13H5" /></svg>
      <Lang>ENG</Lang>
      <Clock>3:06 PM</Clock>
      <svg width="17" height="16" fill="#fff"><path d="M0 1H17V13H11.5L8.5 16V13H0Z" /><path d="M3 4.5H14M3 7H14M3 9.5H9.5" stroke="#292827" /></svg>
      <Sliver />
    </Tray>
  </Taskbar>
);

export default function App() {
  return (
    <Screen>
      <Global />
      <BrowserChrome />
      <Frame>
        <Page>
          <SiteHeader>
            <Brand><BrandFirst>tableau</BrandFirst><BrandPlus>+</BrandPlus><BrandSecond>public</BrandSecond></Brand>
            <NavLink>Create ▾</NavLink>
            <NavLink>Learn</NavLink>
            <HeaderArt><path d="M0 0H36Q32 9 28 9Q24 0 18 0Q11 0 7 9Q2 7 0 0Z" fill="#c9c9c9" /><path d="M71 7L78 0Q82 2 87 0" fill="none" stroke="#386bb2" strokeWidth="1.6" /></HeaderArt>
          </SiteHeader>
          <Banner>
            <span>Want to take your data skills to the next level? Connect with the Tableau Community to accelerate your learning.</span>
            <b>Show me <svg width="16" height="9" fill="none" stroke="#fff" strokeWidth="1.2"><path d="M0 5H15M11.5 2L15 5L11.5 8" /></svg></b>
          </Banner>
          <TitleRow>
            <VizTitle>Dashboard 01</VizTitle><By>by</By><Author>Mohan Babu P</Author>
            <VizActions />
          </TitleRow>
          <Viz>
            <Sheet>
              <SheetTitle>Sheet 1</SheetTitle>
              <WorldMap />
            </Sheet>
            <Legend>
              <LegendTitle>Location</LegendTitle>
              {legend.map(([c, t]) => (
                <LegendRow key={t}><Swatch $c={c} /><LegendText>{t}</LegendText></LegendRow>
              ))}
            </Legend>
          </Viz>
        </Page>
        <Scrollbar><Arrow /><Thumb /><Arrow $down /></Scrollbar>
      </Frame>
      <WindowsTaskbar />
      <Watermark><div>Activate Windows</div><div>Go to Settings to activate Windows.</div></Watermark>
    </Screen>
  );
}
